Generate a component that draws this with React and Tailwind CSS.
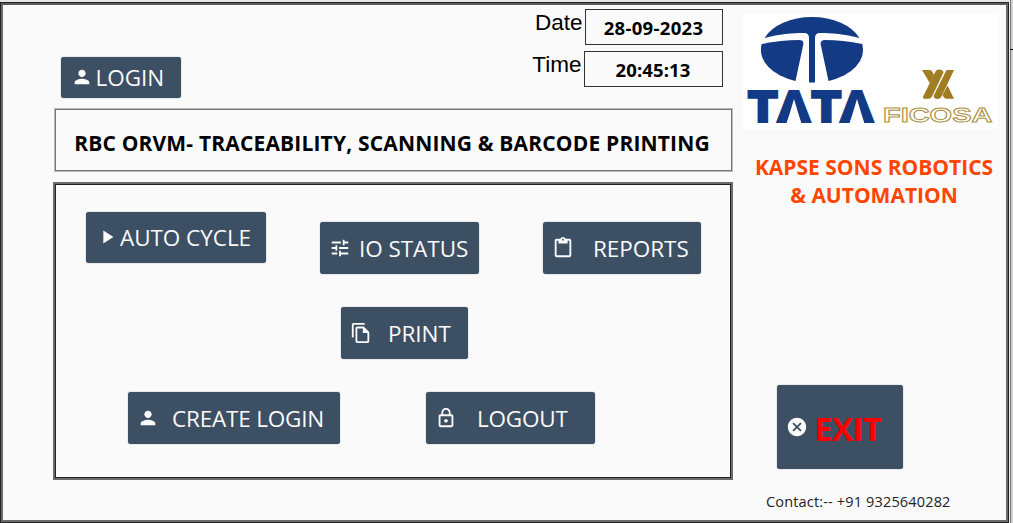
import React from "react";
import { MdPerson, MdPlayArrow, MdTune, MdOutlineContentPaste, MdLockOutline, MdCancel } from "react-icons/md";

function CopyIcon({ className }) {
  return (
    <svg viewBox="0 0 24 24" className={className} fill="currentColor">
      <path d="M16 1H4c-1.100 0-2 .9-2 2v14h2V3h12V1z" />
      <path fillRule="evenodd" d="M15 5l6 6v10a2 2 0 0 1-2 2H8a2 2 0 0 1-2-2V7c0-1.100.9-2 2-2h7zM8 7v14h11v-9h-5V7H8z" />
    </svg>
  );
}

function Button({ icon, label, className, gap, text = "pt-[3px] text-[22.5px] tracking-[-0.05px]" }) {
  return (
    <button className={`flex shrink-0 items-center rounded-[3px] bg-[#3d4f63] text-[#fafafa] shadow-[0_0_1px_#3d4f63] ${className}`}>
      {icon}
      <span className={`leading-none whitespace-nowrap ${gap} ${text}`}>{label}</span>
    </button>
  );
}

function Logos() {
  return (
    <svg viewBox="743 13 255 116" className="block h-[116px] w-[255px] overflow-visible bg-white">
      <g fill="#133a84">
        <path d="M764.500 38A51 33 0 0 1 859.500 38C845 34 831 33 820 33q-5 0-5 5V82.500h-6V38q0-5-5-5C793 33 779 34 764.500 38z" />
        <path d="M761.700 44Q781 40 799 40q5 0 4.300 4.500L795.500 81A51 33 0 0 1 761.700 44z" />
        <path d="M862.300 44Q843 40 825 40q-5 0-4.300 4.500L828.500 81A51 33 0 0 0 862.300 44z" />
      </g>
      <g fontFamily="Liberation Sans, Arial, sans-serif" fontWeight="700">
        <text transform="scale(1.050 1)" x="713.300 740.500 773.800 800.500" y="120.700" fontSize="43" fill="#133a84" stroke="#133a84" strokeWidth="3.800">TATA</text>
        <path fill="#fff" d="M794 99L801.500 124H786.500zM857 99L864.500 124H849.500z" />
        <text transform="translate(883 121.500) scale(1.420 1)" x="0" y="0" fontSize="20" textLength="77" lengthAdjust="spacingAndGlyphs" fill="#fff" stroke="#ad9042" strokeWidth="0.900">FICOSA</text>
      </g>
      <g fill="#a07c22">
        <path d="M922 70h7.500q2 0 3 2l1.500 3-4 8.500z" />
        <path d="M935.500 71.500q1-2 3.500-2 4 0 4.500 3l-11.500 24q-1 2.300-3.500 2.300H924q-1.500-.5-1-2z" />
        <path d="M946.500 70H954l-12 25.500q-1.500 3.500-4.500 3.500-3.500 0-4-3z" />
        <path d="M947.500 85.500l6.500 13.300h-7.500q-2 0-3-2l-1-1.500z" />
      </g>
    </svg>
  );
}

export default function App() {
  const icon = "h-[22px] w-[22px] shrink-0";
  const upper = "pt-px text-[22.5px] tracking-[-0.05px]";
  return (
    <div className="flex h-[523px] w-[1013px] overflow-hidden bg-[#fafafa] font-['Open_Sans','Noto_Sans',sans-serif] text-black">
      <div className="flex h-[523px] w-[1009px] shrink-0 flex-col border-t-2 border-[#e4e6e8]">
        <div className="flex h-[521px] border-[3px] border-[#6b6b6b] border-t-[#5a5a5a] outline-1 -outline-offset-1 outline-[#222]">
          <div className="flex w-[730px] flex-col pl-[50px]">
            <div className="flex h-[103px] justify-between pr-[10.500px]">
              <Button
                className="mt-[52px] ml-[7.500px] h-[40.500px] w-[120.500px] pl-[10px]"
                icon={<MdPerson className={icon} />}
                label="LOGIN"
                gap="ml-[3px]"
                text={upper}
              />
              <div className="flex flex-col items-end gap-[6px] pt-[4px] font-bold">
                <div className="flex">
                  <span className="mr-[2px] font-['Liberation_Sans'] text-[22.500px] leading-[28px] font-normal">Date</span>
                  <div className="flex h-[36px] w-[138px] items-center justify-center border border-[#333] pt-[2px] text-[18.500px] leading-none tracking-[0.3px]">28-09-2023</div>
                </div>
                <div className="flex">
                  <span className="mr-[2px] font-['Liberation_Sans'] text-[22.500px] leading-[28px] font-normal">Time</span>
                  <div className="flex h-[36px] w-[139px] items-center justify-center border border-[#333] pt-[2px] text-[18.500px] leading-none tracking-[0.1px]">20:45:13</div>
                </div>
              </div>
            </div>
            <h1 className="ml-px flex h-[64px] w-[679px] items-center justify-center border-2 border-[#777] pt-[6px] pr-[3px] text-[21px] leading-none font-bold tracking-[0.17px] whitespace-nowrap outline-1 -outline-offset-1 outline-[#bbb]">
              RBC ORVM- TRACEABILITY, SCANNING &amp; BARCODE PRINTING
            </h1>
            <main className="mt-[10px] h-[298px] w-[680px] border-[3px] border-[#6b6b6b] pt-[26.500px] outline-1 -outline-offset-3 outline-[#222]">
              <div className="flex items-start pl-[30px]">
                <Button className="h-[51.500px] w-[180px] pl-[10px]" icon={<MdPlayArrow className={icon} />} label="AUTO CYCLE" gap="ml-[2px]" text={upper} />
                <Button className="mt-[10px] ml-[54px] h-[52px] w-[158.500px] pl-[9px]" icon={<MdTune className={icon} />} label="IO STATUS" gap="ml-[8px]" />
                <Button className="mt-[10px] ml-[64.500px] h-[52px] w-[158px] pl-[9px]" icon={<MdOutlineContentPaste className={icon} />} label="REPORTS" gap="ml-[19px]" />
              </div>
              <div className="mt-[33px] flex pl-[285px]">
                <Button className="h-[52px] w-[127px] pl-[9px]" icon={<CopyIcon className={icon} />} label="PRINT" gap="ml-[16px]" />
              </div>
              <div className="mt-[33px] flex gap-[86px] pl-[72px]">
                <Button className="h-[52px] w-[212px] pl-[9px]" icon={<MdPerson className={icon} />} label="CREATE LOGIN" gap="ml-[13px]" text="pt-[3px] text-[22.5px] tracking-[-0.2px]" />
                <Button className="h-[52px] w-[169px] pl-[9px]" icon={<MdLockOutline className={icon} />} label="LOGOUT" gap="ml-[20px]" text="pt-[3px] text-[22.5px] tracking-[-0.2px]" />
              </div>
            </main>
          </div>
          <aside className="flex flex-1 flex-col pt-[8px] pl-[10px]">
            <Logos />
            <p className="mt-[24px] w-[262px] text-center text-[21px] leading-[28px] font-bold whitespace-nowrap text-[#ff4500]">
              KAPSE SONS ROBOTICS
              <br />
              &amp; AUTOMATION
            </p>
            <Button
              className="mt-[176px] ml-[33.500px] h-[84px] w-[126.500px] pl-[9px]"
              icon={<MdCancel className={icon} />}
              label="EXIT"
              gap="ml-[7px]"
              text="pt-[3px] text-[32px] tracking-[-0.4px] font-bold text-[#ff0000]"
            />
            <p className="mt-[24px] ml-[23px] text-[14.500px] leading-[18px] tracking-[0.16px] whitespace-nowrap text-[#222]">Contact:-- +91 9325640282</p>
          </aside>
        </div>
      </div>
      <div className="flex w-[4px] flex-col border-l border-[#eee]">
        <div className="h-[49px] border-l border-[#777] bg-[#d0d0d0]" />
        <div className="h-px bg-black" />
        <div className="flex-1 border-l border-[#777] bg-[#d0d0d0]" />
      </div>
    </div>
  );
}
